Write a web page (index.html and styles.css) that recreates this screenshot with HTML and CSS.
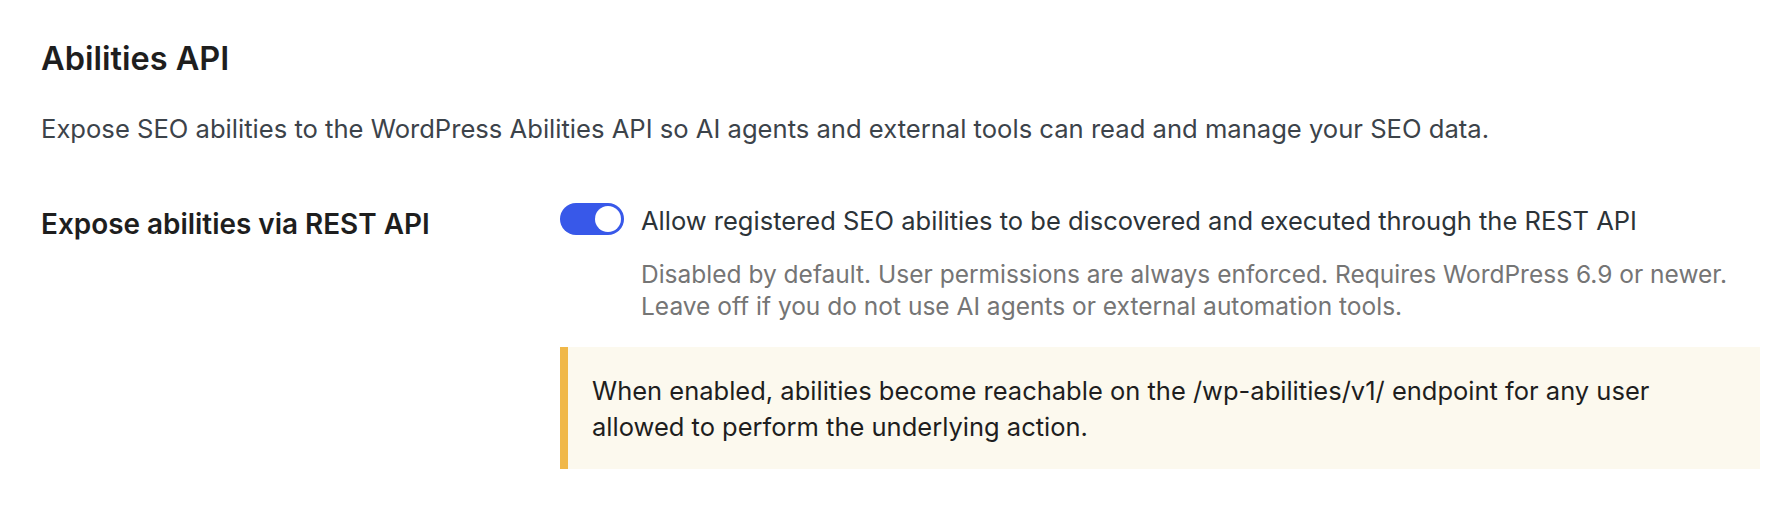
FILE: index.html
```html
<!DOCTYPE html>
<html lang="en">
<head>
<meta charset="utf-8">
<title>Abilities API</title>
<link rel="stylesheet" href="styles.css">
</head>
<body>
<div class="page">
  <h2 class="title">Abilities API</h2>
  <p class="intro">Expose SEO abilities to the WordPress Abilities API so AI agents and external tools can read and manage your SEO data.</p>
  <div class="row">
    <div class="label">Expose abilities via REST API</div>
    <div class="field">
      <label class="toggle-line">
        <span class="toggle"><span class="knob"></span></span>
        <span class="toggle-text">Allow registered SEO abilities to be discovered and executed through the REST API</span>
      </label>
      <p class="help">Disabled by default. User permissions are always enforced. Requires WordPress 6.9 or newer.<br>Leave off if you do not use AI agents or external automation tools.</p>
      <div class="notice">When enabled, abilities become reachable on the /wp-abilities/v1/ endpoint for any user<br>allowed to perform the underlying action.</div>
    </div>
  </div>
</div>
</body>
</html>
```
FILE: styles.css
```css
html, body {
  margin: 0;
  padding: 0;
  background: #ffffff;
}
body {
  font-family: Inter, "Noto Sans", sans-serif;
  color: #1e1e1e;
}
.page {
  padding: 41px 32px 0 41px;
}
.title {
  margin: 0;
  font-size: 32.5px;
  font-weight: 600;
  line-height: 36px;
  color: #1e1e1e;
}
.intro {
  margin: 36px 0 0;
  font-size: 25.6px;
  line-height: 32px;
  color: #3c434a;
  white-space: nowrap;
}
.row {
  display: grid;
  grid-template-columns: 519px 1fr;
  margin-top: 56px;
}
.label {
  font-size: 27.9px;
  font-weight: 600;
  line-height: 32px;
  color: #1e1e1e;
  padding-top: 7px;
}
.toggle-line {
  display: flex;
  align-items: flex-start;
  gap: 17px;
}
.toggle {
  width: 64px;
  height: 32px;
  margin-top: 2px;
  border-radius: 16px;
  background: #3858e9;
  display: flex;
  align-items: center;
  justify-content: flex-end;
  padding: 0 3px;
  box-sizing: border-box;
  flex: none;
}
.knob {
  width: 26px;
  height: 26px;
  border-radius: 50%;
  background: #ffffff;
}
.toggle-text {
  font-size: 25.5px;
  line-height: 32px;
  padding-top: 4px;
  color: #2c3338;
  white-space: nowrap;
}
.help {
  margin: 21px 0 0 81px;
  font-size: 24.5px;
  line-height: 32px;
  color: #757575;
  white-space: nowrap;
}
.notice {
  margin-top: 25px;
  background: #fcf9ee;
  border-left: 8px solid #f0b849;
  padding: 26px 32px 24px 24px;
  font-size: 25.5px;
  line-height: 36px;
  color: #1e1e1e;
  white-space: nowrap;
}
```
